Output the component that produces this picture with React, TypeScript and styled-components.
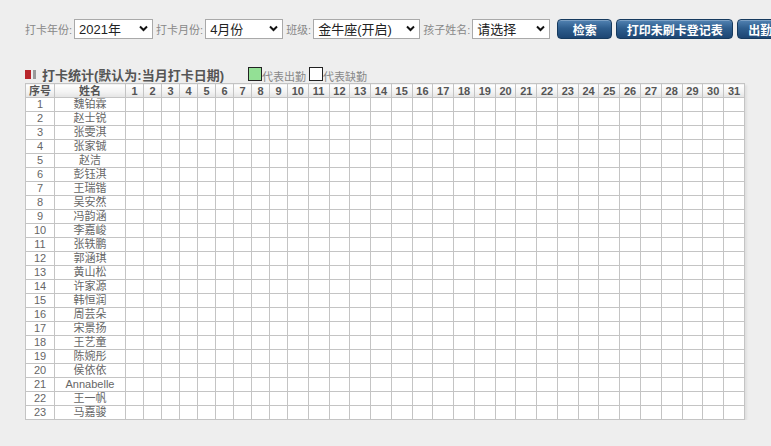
import styled, { createGlobalStyle } from "styled-components";

const GlobalStyle = createGlobalStyle`
  html, body {
    margin: 0;
    padding: 0;
    background: #eeeeee;
    overflow: hidden;
  }
  body {
    font-family: "Liberation Sans", "Noto Sans CJK SC", sans-serif;
    color: #555;
  }
`;

const Page = styled.div`
  padding: 19px 0 0 25px;
  width: 900px;
`;

const Toolbar = styled.div`
  display: flex;
  align-items: center;
  white-space: nowrap;
  height: 20px;
`;

const Label = styled.span`
  font-size: 11px;
  color: #888;
  margin-right: 2px;
`;

const SelectWrap = styled.div<{ w: number }>`
  position: relative;
  width: ${({ w }) => w}px;
  height: 20px;
  margin-right: 3px;
`;

const Select = styled.select`
  appearance: none;
  width: 100%;
  height: 100%;
  box-sizing: border-box;
  border: 1px solid #a9a9a9;
  background: #fff;
  padding: 0 0 0 4px;
  font-family: "Liberation Sans", "Noto Sans CJK SC", sans-serif;
  font-size: 13px;
  color: #222;
  outline: none;
`;

const Chevron = styled.svg`
  position: absolute;
  right: 5px;
  top: 6px;
  pointer-events: none;
`;

const Button = styled.button<{ w: number }>`
  width: ${({ w }) => w}px;
  height: 20px;
  margin-left: 4px;
  flex-shrink: 0;
  border: 1px solid #163a5e;
  border-radius: 4px;
  background: linear-gradient(to bottom, #5283b3 0%, #2f5e8e 45%, #1d4673 100%);
  color: #fff;
  font-family: "Liberation Sans", "Noto Sans CJK SC", sans-serif;
  font-size: 12px;
  font-weight: bold;
  padding: 0;
  cursor: pointer;
  box-shadow: inset 0 1px 0 rgba(255, 255, 255, 0.25);
`;

const TitleRow = styled.div`
  display: flex;
  align-items: center;
  margin-top: 26px;
  height: 18px;
`;

const TitleIcon = styled.span`
  display: inline-flex;
  gap: 2px;
  margin-right: 6px;
`;

const IconBar = styled.span<{ c: string; w: number }>`
  display: block;
  width: ${({ w }) => w}px;
  height: 9px;
  background: ${({ c }) => c};
`;

const Title = styled.span`
  font-size: 13px;
  font-weight: bold;
  color: #555;
  margin-right: 24px;
`;

const LegendBox = styled.span<{ bg: string }>`
  display: inline-block;
  width: 12px;
  height: 12px;
  border: 1px solid #222;
  background: ${({ bg }) => bg};
`;

const LegendText = styled.span`
  font-size: 11px;
  color: #888;
  margin-right: 3px;
  position: relative;
  top: 2px;
`;

const Table = styled.table`
  border-collapse: collapse;
  table-layout: fixed;
  width: 720px;
  background: #fff;
  box-shadow: 2px 2px 2px rgba(0, 0, 0, 0.06);
  font-size: 11px;
`;

const Th = styled.th`
  height: 13px;
  padding: 0;
  line-height: 12px;
  border: 1px solid #c4c4c4;
  background: linear-gradient(to bottom, #ffffff 0%, #f2f2f2 60%, #e4e4e4 100%);
  color: #555;
  font-weight: bold;
  text-align: center;
  overflow: hidden;
`;

const Td = styled.td`
  height: 13px;
  padding: 0;
  line-height: 13px;
  border: 1px solid #c4c4c4;
  text-align: center;
  color: #666;
  white-space: nowrap;
  overflow: hidden;
`;

const names = [
  "魏铂霖", "赵士锐", "张雯淇", "张家铖", "赵洁", "彭钰淇", "王瑞锴", "吴安然",
  "冯韵涵", "李嘉峻", "张轶鹏", "郭涵琪", "黄山松", "许家源", "韩恒润", "周芸朵",
  "宋景扬", "王艺童", "陈婉彤", "侯依依", "Annabelle", "王一帆", "马嘉骏",
];

const days = Array.from({ length: 31 }, (_, i) => i + 1);

function Dropdown({ w, value }: { w: number; value: string }) {
  return (
    <SelectWrap w={w}>
      <Select defaultValue={value}>
        <option>{value}</option>
      </Select>
      <Chevron width="9" height="7" viewBox="0 0 9 7">
        <path d="M1 1.5 L4.5 5 L8 1.5" fill="none" stroke="#111" strokeWidth="2" />
      </Chevron>
    </SelectWrap>
  );
}

export default function App() {
  return (
    <>
      <GlobalStyle />
      <Page>
        <Toolbar>
          <Label>打卡年份:</Label>
          <Dropdown w={79} value="2021年" />
          <Label>打卡月份:</Label>
          <Dropdown w={78} value="4月份" />
          <Label>班级:</Label>
          <Dropdown w={107} value="金牛座(开启)" />
          <Label>孩子姓名:</Label>
          <Dropdown w={78} value="请选择" />
          <Button w={55}>检索</Button>
          <Button w={117}>打印未刷卡登记表</Button>
          <Button w={70}>出勤统计</Button>
        </Toolbar>

        <TitleRow>
          <TitleIcon>
            <IconBar c="#b8262b" w={6} />
            <IconBar c="#9a9a9a" w={3} />
          </TitleIcon>
          <Title>打卡统计(默认为:当月打卡日期)</Title>
          <LegendBox bg="#93e095" />
          <LegendText>代表出勤</LegendText>
          <LegendBox bg="#ffffff" />
          <LegendText>代表缺勤</LegendText>
        </TitleRow>

        <Table>
          <colgroup>
            <col style={{ width: 29 }} />
            <col style={{ width: 71 }} />
            {days.map((d) => (
              <col key={d} style={d < 10 ? { width: 18 } : undefined} />
            ))}
          </colgroup>
          <thead>
            <tr>
              <Th>序号</Th>
              <Th>姓名</Th>
              {days.map((d) => (
                <Th key={d}>{d}</Th>
              ))}
            </tr>
          </thead>
          <tbody>
            {names.map((n, i) => (
              <tr key={n}>
                <Td>{i + 1}</Td>
                <Td>{n}</Td>
                {days.map((d) => (
                  <Td key={d} />
                ))}
              </tr>
            ))}
          </tbody>
        </Table>
      </Page>
    </>
  );
}
